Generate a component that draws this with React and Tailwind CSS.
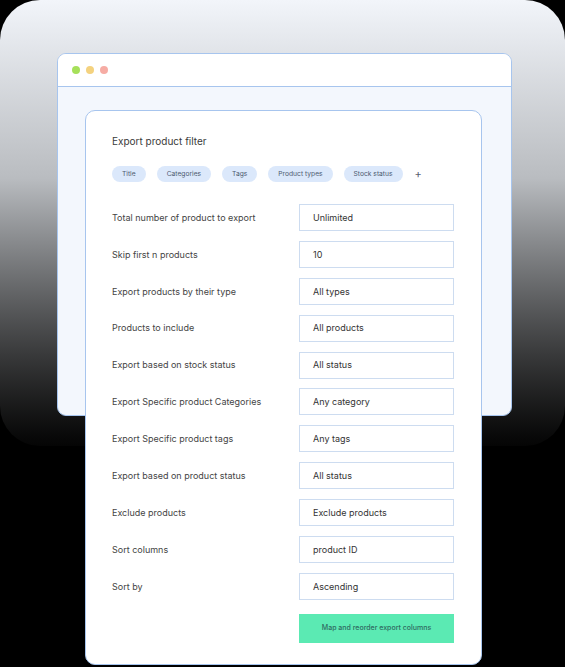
import React from "react";

const rows = [
  ["Total number of product to export", "Unlimited"],
  ["Skip first n products", "10"],
  ["Export products by their type", "All types"],
  ["Products to include", "All products"],
  ["Export based on stock status", "All status"],
  ["Export Specific product Categories", "Any category"],
  ["Export Specific product tags", "Any tags"],
  ["Export based on product status", "All status"],
  ["Exclude products", "Exclude products"],
  ["Sort columns", "product ID"],
  ["Sort by", "Ascending"],
];

const chips = ["Title", "Categories", "Tags", "Product types", "Stock status"];

export default function App() {
  return (
    <div
      className="relative w-[565px] h-[667px] bg-black overflow-hidden"
      style={{ fontFamily: "Inter, 'Liberation Sans', sans-serif" }}
    >
      <div className="h-[446px] rounded-[40px] bg-gradient-to-b from-[#f2f5fa] via-[#b9bcc0] via-40% to-[#050505] pt-[53px] px-[57px]">
        <div className="h-[363px] w-[455px] rounded-[9px] border border-[#a7c5ee] bg-[#f3f7fd] overflow-hidden flex flex-col">
          <div className="h-[33px] bg-white border-b border-[#a7c5ee] flex items-center gap-[6px] pl-[14px]">
            <span className="w-[8px] h-[8px] rounded-full bg-[#a6e05a]" />
            <span className="w-[8px] h-[8px] rounded-full bg-[#f4d27f]" />
            <span className="w-[8px] h-[8px] rounded-full bg-[#f6aca4]" />
          </div>
        </div>
      </div>

      <div className="absolute left-[85px] top-[110px] w-[397px] h-[555px] rounded-[10px] border border-[#a7c5ee] bg-white pl-[26px] pr-[27px] pt-[23px]">
        <div className="text-[10px] leading-[14px] text-[#3a3a3a]">Export product filter</div>
        <div className="flex items-center mt-[18px] gap-[11px]">
          {chips.map((c) => (
            <span
              key={c}
              className="h-[16px] px-[10px] rounded-full bg-[#dbe8fb] text-[6.7px] text-[#4d5b70] flex items-center"
            >
              {c}
            </span>
          ))}
          <span className="text-[11px] text-[#5a6270] ml-[1px] leading-none">+</span>
        </div>
        <div className="mt-[22px] flex flex-col gap-[9.9px]">
          {rows.map(([l, v]) => (
            <div key={l} className="flex items-center">
              <div className="w-[187px] text-[9px] text-[#444]">{l}</div>
              <div className="w-[155px] h-[27px] border border-[#cddcf0] flex items-center pl-[13px] text-[9px] text-[#333]">
                {v}
              </div>
            </div>
          ))}
        </div>
        <div className="mt-[14px] ml-[187px] w-[155px] h-[29px] bg-[#5beab3] flex items-center justify-center text-[7px] font-medium text-[#2f6a62]">
          Map and reorder export columns
        </div>
      </div>
    </div>
  );
}
